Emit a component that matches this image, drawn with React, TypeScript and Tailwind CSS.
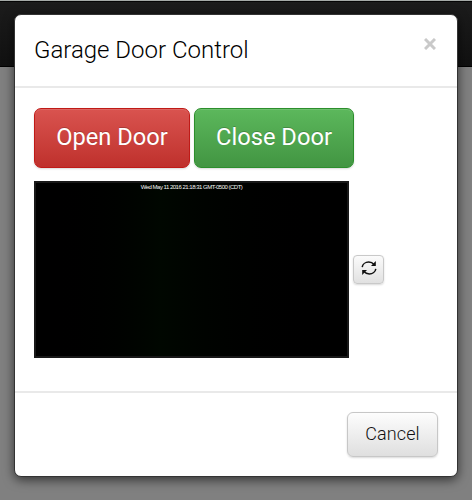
function RefreshIcon() {
  return (
    <svg width="16" height="16" viewBox="0 0 16 16" fill="none" stroke="#101010" strokeWidth="1.5">
      <path d="M1.2 7.2C1.6 4.2 4.4 2.1 7.7 2.1c2.2 0 4 .8 5.3 2.4" />
      <path d="M14.8 8.8c-.4 3-3.2 5.1-6.5 5.1-2.2 0-4-.8-5.3-2.4" />
      <path d="M14.8 1v5H10Z" fill="#101010" stroke="none" />
      <path d="M1.2 15v-5H6Z" fill="#101010" stroke="none" />
    </svg>
  );
}

function CameraFeed() {
  return (
    <div className="flex h-[177px] w-[315px] justify-center border-2 border-[#181818] bg-linear-to-r from-black via-[#000700] via-40% to-black">
      <span className="h-[9px] whitespace-nowrap font-['Liberation_Sans',sans-serif] text-[6px] leading-[8px] tracking-[-0.5px] text-[#f4f4f4]">
        Wed May 11 2016 21:18:31 GMT-0500 (CDT)
      </span>
    </div>
  );
}

export default function App() {
  return (
    <div className="relative h-[500px] w-[472px] overflow-hidden bg-[#808080] font-[Roboto,sans-serif]">
      <div className="h-[67px] border-t border-b border-t-[#a5aaa7] border-b-black bg-linear-to-b from-[#1c1c1c] to-[#111111] shadow-[inset_0_1px_0_#050505]" />
      <div
        role="dialog"
        className="absolute top-[14px] left-[14px] flex h-[463px] w-[444px] flex-col rounded-[7px] border border-[#333333] bg-white shadow-[0_3px_11px_rgba(0,0,0,0.6)]"
      >
        <header className="flex h-[73px] shrink-0 items-start justify-between border-b-2 border-[#e9e9e9] pr-[20px] pl-[19px]">
          <h3 className="mt-[19px] text-[24px] leading-8 font-light text-black">
            Garage Door Control
          </h3>
          <button aria-label="Close" className="mt-[22px] flex size-[14px] items-center justify-center">
            <svg width="12" height="12" viewBox="0 0 12 12" fill="none" stroke="#c9c9c9" strokeWidth="3">
              <path d="m1 1 10 10M11 1 1 11" />
            </svg>
          </button>
        </header>
        <main className="flex h-[303px] shrink-0 flex-col pt-[20px] pl-[19px]">
          <div className="flex gap-1">
            <button className="h-[60px] w-[156px] rounded-[7px] border border-[#c01a17] bg-linear-to-b from-[#d9534f] to-[#bf302c] text-[23.7px] text-white shadow-[inset_0_1px_0_rgba(255,255,255,0.12),0_1px_2px_rgba(0,0,0,0.15)] [text-shadow:0_-1px_0_rgba(0,0,0,0.2)]">
              Open Door
            </button>
            <button className="h-[60px] w-[160px] rounded-[7px] border border-[#2c8e2c] bg-linear-to-b from-[#5cb85c] to-[#429542] text-[23.7px] text-white shadow-[inset_0_1px_0_rgba(255,255,255,0.12),0_1px_2px_rgba(0,0,0,0.15)] [text-shadow:0_-1px_0_rgba(0,0,0,0.2)]">
              Close Door
            </button>
          </div>
          <div className="mt-[13px] flex items-center gap-1">
            <CameraFeed />
            <button
              aria-label="Refresh camera"
              className="flex h-[29px] w-[31px] items-center justify-center rounded-[4px] border border-[#c9c9c9] bg-linear-to-b from-[#fbfbfb] to-[#e1e1e1] pb-[3px] shadow-[0_1px_2px_rgba(0,0,0,0.15)]"
            >
              <RefreshIcon />
            </button>
          </div>
        </main>
        <footer className="flex grow items-start justify-end border-t-2 border-[#e9e9e9] pt-[19px] pr-[19px]">
          <button className="h-[45px] w-[91px] rounded-[6px] border border-[#c7c7c7] bg-linear-to-b from-[#fdfdfd] to-[#dfdfdf] pb-[3px] text-[18px] font-light tracking-[0.1px] text-[#111111] shadow-[0_1px_2px_rgba(0,0,0,0.15)]">
            Cancel
          </button>
        </footer>
      </div>
    </div>
  );
}
